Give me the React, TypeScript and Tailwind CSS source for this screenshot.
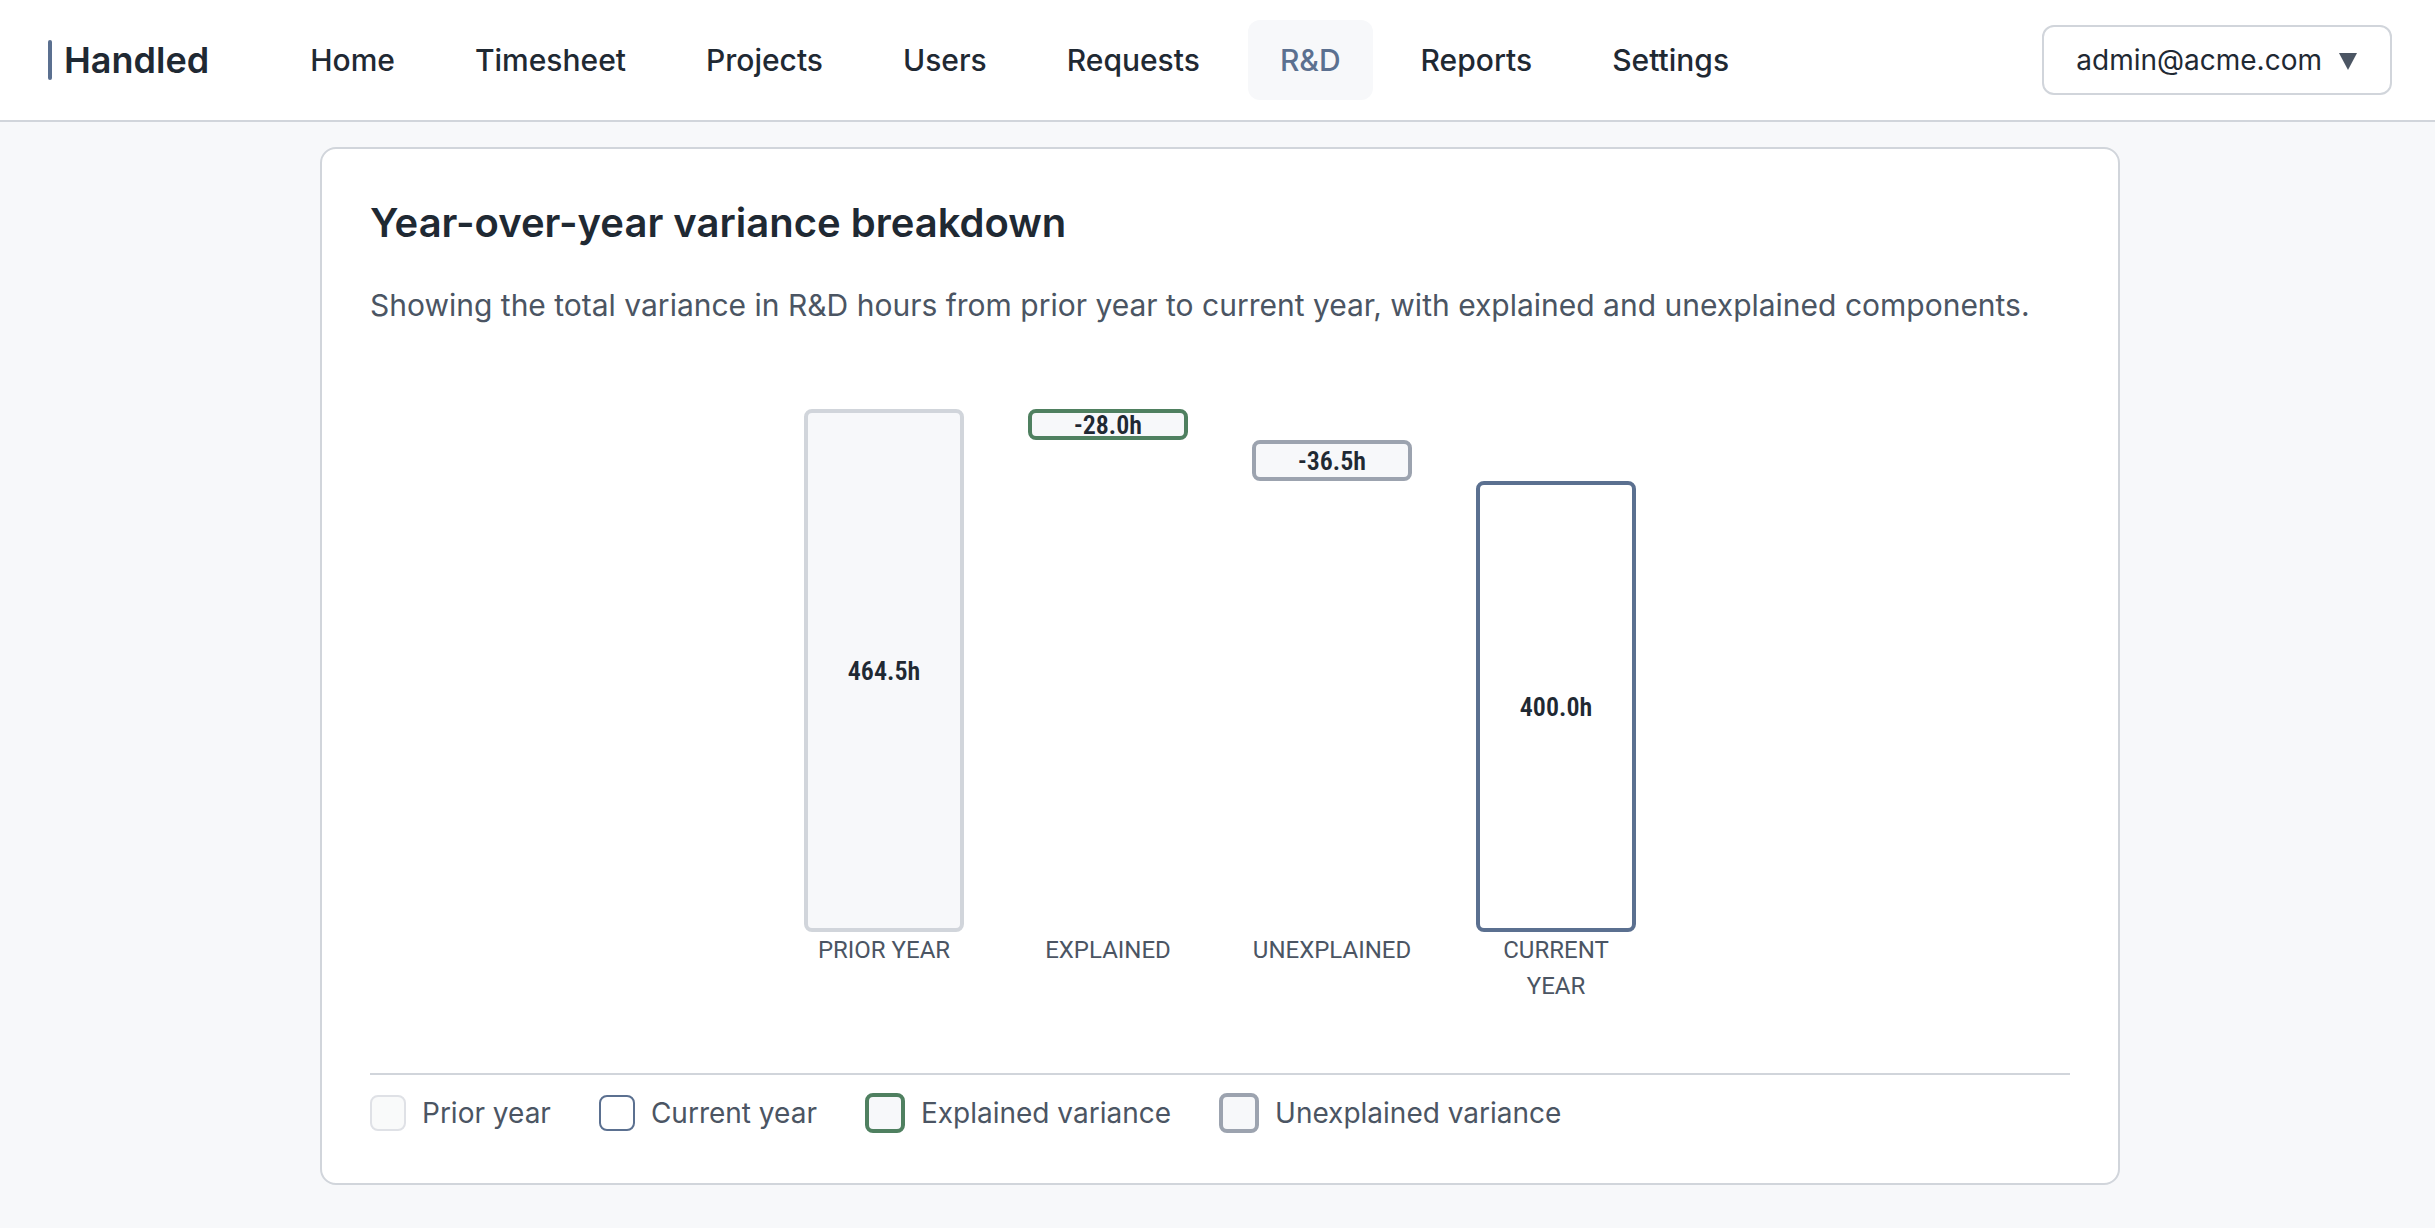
const navItems = ["Home", "Timesheet", "Projects", "Users", "Requests", "R&D", "Reports", "Settings"];

const bars = [
  { label: "Prior year", value: "464.5h", above: "h-0", size: "h-[523px]", below: "h-0", look: "border-[#d1d5db] bg-[#f7f8fa]" },
  { label: "Explained", value: "-28.0h", above: "h-0", size: "h-[31px]", below: "h-[492px]", look: "border-[#4f8060] bg-[#f7f8fa]" },
  { label: "Unexplained", value: "-36.5h", above: "h-[31px]", size: "h-[41px]", below: "h-[451px]", look: "border-[#9ca3af] bg-[#f7f8fa]" },
  { label: "Current year", value: "400.0h", above: "h-[72px]", size: "h-[451px]", below: "h-0", look: "border-[#5b7090] bg-white" },
];

const legend = [
  { label: "Prior year", look: "size-9 border-2 border-[#dfe1e6] bg-[#f9fafa]" },
  { label: "Current year", look: "size-9 border-2 border-[#5b7090] bg-white" },
  { label: "Explained variance", look: "size-10 border-4 border-[#4f8060] bg-[#f7f8fa]" },
  { label: "Unexplained variance", look: "size-10 border-4 border-[#9ca3af] bg-[#f7f8fa]" },
];

function Header() {
  return (
    <header className="flex items-center border-b-2 border-[#d1d5db] bg-white py-5 pr-[43px] pl-12">
      <a href="#" className="flex items-center gap-3 text-4xl font-semibold">
        <span className="h-10 w-1 rounded-[2px] bg-[#5b7090]" />
        Handled
      </a>
      <nav className="ml-[69px] flex gap-4">
        {navItems.map((item) => (
          <a
            key={item}
            href="#"
            aria-current={item === "R&D" ? "page" : undefined}
            className={
              item === "R&D"
                ? "flex h-20 items-center rounded-xl bg-[#f7f8fa] px-8 text-[30px] font-medium text-[#5b7090]"
                : "flex h-20 items-center rounded-xl px-8 text-[30px] font-medium"
            }
          >
            {item}
          </a>
        ))}
      </nav>
      <button
        type="button"
        className="ml-auto flex h-[70px] items-center gap-4 rounded-xl border-2 border-[#d1d5db] bg-white px-8 text-[28px]"
      >
        admin@acme.com
        <svg viewBox="0 0 20 20" className="size-5 fill-[#4b5563]" aria-hidden="true">
          <path d="M1 3H19L10 20Z" />
        </svg>
      </button>
    </header>
  );
}

function VarianceChart() {
  return (
    <div className="flex justify-center gap-16">
      {bars.map((bar) => (
        <div key={bar.label} className="flex w-40 flex-col">
          <div className={bar.above} />
          <div
            className={`flex items-center justify-center rounded-lg border-4 font-['Roboto_Condensed','Roboto',sans-serif] text-[26px] leading-none font-semibold ${bar.size} ${bar.look}`}
          >
            {bar.value}
          </div>
          <div className={bar.below} />
          <div className="text-center font-['Roboto',sans-serif] text-2xl leading-9 text-[#4b5563] uppercase">
            {bar.label}
          </div>
        </div>
      ))}
    </div>
  );
}

export default function App() {
  return (
    <div className="min-h-screen bg-[#f7f8fa] font-['Inter',sans-serif] text-[#1f2933]">
      <Header />
      <main className="pt-[25px] pb-10 pl-[5px]">
        <section className="mx-auto max-w-[1800px] rounded-2xl border-2 border-[#d1d5db] bg-white p-12">
          <h1 className="text-[40px] leading-[52px] font-semibold">Year-over-year variance breakdown</h1>
          <p className="mt-8 mb-20 text-[30px] leading-[48px] text-[#4b5563]">
            Showing the total variance in R&amp;D hours from prior year to current year, with explained and unexplained
            components.
          </p>
          <VarianceChart />
          <ul className="mt-[69px] flex gap-12 border-t-2 border-[#d1d5db] pt-4">
            {legend.map((item) => (
              <li key={item.label} className="flex items-center gap-4 text-[28px] leading-[44px] text-[#4b5563]">
                <span className={`rounded-lg ${item.look}`} />
                {item.label}
              </li>
            ))}
          </ul>
        </section>
      </main>
    </div>
  );
}
